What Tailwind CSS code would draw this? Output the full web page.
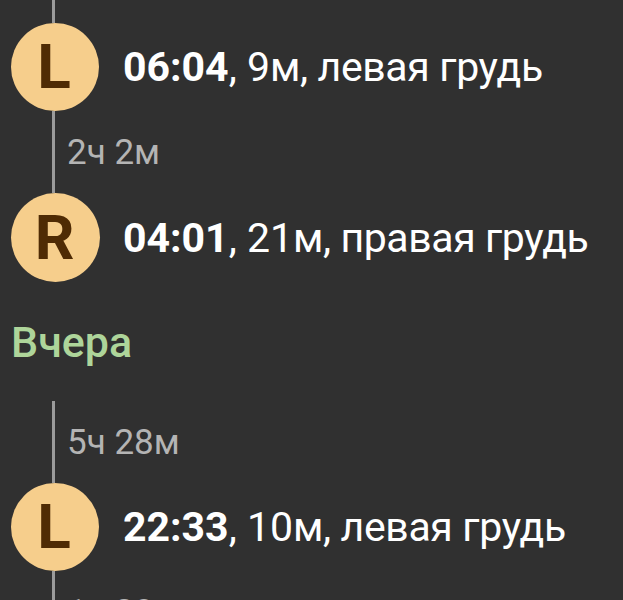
<!doctype html>
<html lang="ru">
  <head>
    <title>Кормления</title>

    <meta charset="UTF-8" />
    <meta name="viewport" content="width=device-width, initial-scale=1.0" />

    <script src="https://cdn.jsdelivr.net/npm/@tailwindcss/browser@4"></script>
  </head>
  <body class="bg-[#303030] overflow-hidden">
    <main
      class="flex flex-col h-[600px] overflow-hidden pl-[11px] font-['Roboto',sans-serif] text-[41px] leading-none text-white whitespace-nowrap"
    >
      <div class="shrink-0 h-[23px] ml-[41px] border-l-3 border-[#9b9b9b]"></div>

      <div class="shrink-0 flex items-center gap-6 h-[88px]">
        <div
          class="flex items-center justify-center size-[88px] pr-0.5 rounded-full bg-[#f6ce8c] text-[#4f2b04] text-[62px] font-bold"
        >
          L
        </div>
        <div class="pt-px"><b>06:04</b>, 9<span class="tracking-[-0.35px]">м, левая грудь</span></div>
      </div>

      <div
        class="shrink-0 flex items-center h-[82px] ml-[41px] pl-3 pt-px border-l-3 border-[#9b9b9b] text-[35px] text-[#b4b4b4]"
      >
        2ч 2м
      </div>

      <div class="shrink-0 flex items-center gap-6 h-[89px]">
        <div
          class="flex items-center justify-center size-[89px] -mr-px pr-0.5 rounded-full bg-[#f6ce8c] text-[#4f2b04] text-[62px] font-bold"
        >
          R
        </div>
        <div class="pt-0.5"><b>04:01</b>, 21<span class="tracking-[-0.4px]">м, правая грудь</span></div>
      </div>

      <h2 class="shrink-0 flex items-center h-[119px] pt-0.5 font-medium text-[43px] text-[#aed59a]">
        Вчера
      </h2>

      <div
        class="shrink-0 flex items-center h-[82px] ml-[41px] pl-3 pt-px border-l-3 border-[#9b9b9b] text-[35px] text-[#b4b4b4]"
      >
        5ч 28м
      </div>

      <div class="shrink-0 flex items-center gap-6 h-[88px]">
        <div
          class="flex items-center justify-center size-[88px] pr-0.5 rounded-full bg-[#f6ce8c] text-[#4f2b04] text-[62px] font-bold"
        >
          L
        </div>
        <div class="pt-px"><b>22:33</b>, 10<span class="tracking-[-0.35px]">м, левая грудь</span></div>
      </div>

      <div
        class="shrink-0 flex items-center h-[82px] ml-[41px] pl-3 pt-px border-l-3 border-[#9b9b9b] text-[35px] text-[#b4b4b4]"
      >
        1ч 28м
      </div>
    </main>
  </body>
</html>
